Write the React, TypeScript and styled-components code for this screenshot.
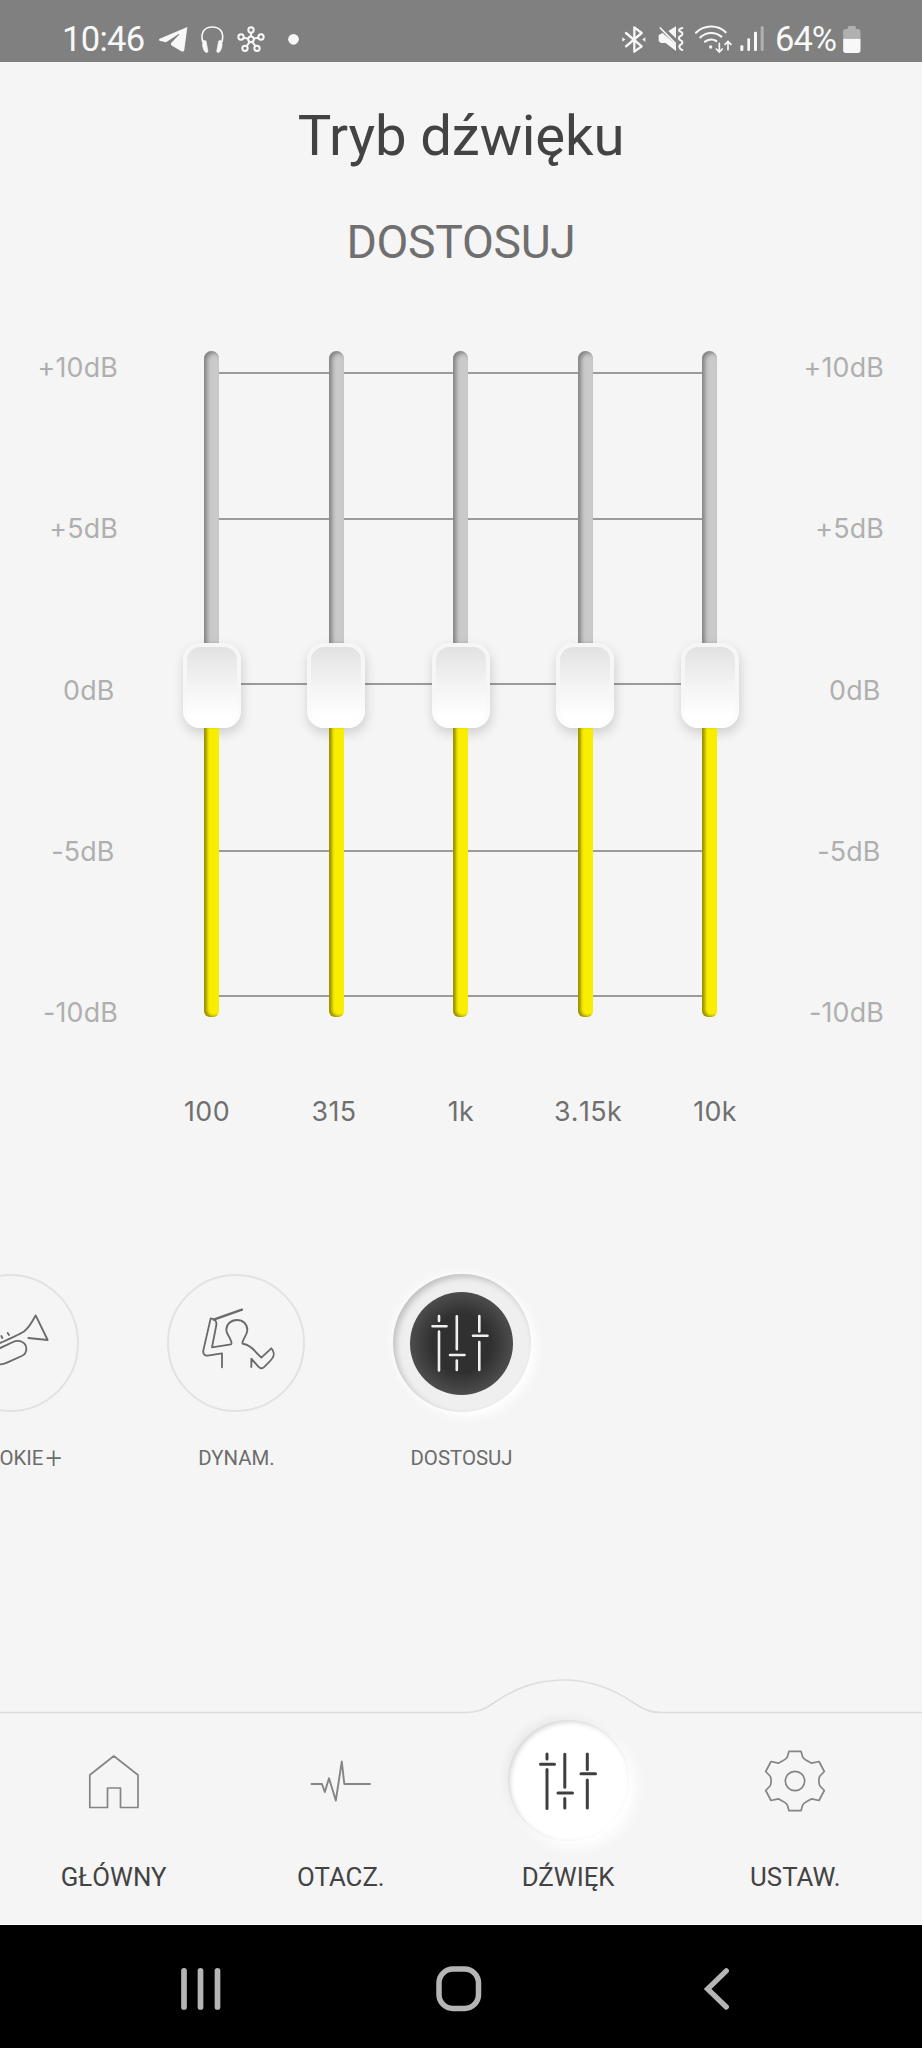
import React from "react";
import styled, { createGlobalStyle } from "styled-components";

const GlobalStyle = createGlobalStyle`
  * { box-sizing: border-box; }
  body { margin: 0; background: #f5f5f5; }
`;

const Screen = styled.div`
  width: 922px;
  height: 2048px;
  display: flex;
  flex-direction: column;
  overflow: hidden;
  background: #f5f5f5;
  font-family: Roboto, "Liberation Sans", sans-serif;
`;

const StatusBar = styled.header`
  height: 62px;
  flex: none;
  display: flex;
  justify-content: space-between;
  align-items: flex-end;
  padding: 0 61px 8px 62px;
  background: #808080;
  color: #f8f8f8;
`;

const StatusGroup = styled.div`
  display: flex;
  align-items: center;
  height: 30px;
`;

const StatusText = styled.span<{ $width: number; $spacing: number }>`
  width: ${(p) => p.$width}px;
  font-size: 34.5px;
  line-height: 30px;
  letter-spacing: ${(p) => p.$spacing}px;
  white-space: nowrap;
`;

const StatusIcon = styled.svg<{ $gap: number }>`
  display: block;
  flex: none;
  margin-left: ${(p) => p.$gap}px;
  overflow: visible;
`;

const BatteryText = styled.div`
  display: flex;
  margin-left: 11px;
`;

const Title = styled.h1`
  margin: 44px 0 0;
  font-size: 56.3px;
  line-height: 60px;
  font-weight: 400;
  letter-spacing: -0.15px;
  text-align: center;
  color: #434343;
`;

const ModeName = styled.h2`
  margin: 51px 0 0;
  font-size: 46.3px;
  line-height: 50px;
  font-weight: 400;
  letter-spacing: -0.3px;
  text-align: center;
  color: #6f6f6f;
`;

const Equalizer = styled.section`
  display: flex;
  height: 677px;
  margin-top: 84px;
  padding: 0 38px 0 0;
`;

const Scale = styled.div<{ $width: number }>`
  width: ${(p) => p.$width}px;
  display: flex;
  flex-direction: column;
  justify-content: space-between;
  text-align: right;
`;

const ScaleLabel = styled.span<{ $inset?: boolean }>`
  font-family: Inter, "Liberation Sans", sans-serif;
  font-size: 26.8px;
  line-height: 32px;
  letter-spacing: 0.2px;
  padding-right: ${(p) => (p.$inset ? 3.5 : 0)}px;
  color: #afafaf;
`;

const gridLine = "linear-gradient(#9b9b9b, #9b9b9b)";

const Chart = styled.div`
  width: 556px;
  height: 666px;
  margin: 0 auto 0 64.5px;
  display: flex;
  justify-content: space-between;
  background-image: ${gridLine}, ${gridLine}, ${gridLine}, ${gridLine}, ${gridLine};
  background-repeat: no-repeat;
  background-size: 498px 2px;
  background-position: 29px 21px, 29px 167px, 29px 332px, 29px 499px, 29px 644px;
`;

const Slider = styled.div`
  width: 58px;
  display: flex;
  flex-direction: column;
  align-items: center;
`;

const TrackAbove = styled.div`
  width: 15px;
  height: 292px;
  border-radius: 8px 8px 0 0;
  background: #cacaca;
  box-shadow: inset 3px 2px 4px rgba(0, 0, 0, 0.36);
`;

const TrackBelow = styled.div`
  width: 15px;
  flex: 1;
  border-radius: 0 0 6px 6px;
  background: #faee00;
  box-shadow: inset 3px -1px 3px rgba(60, 55, 0, 0.5);
`;

const Thumb = styled.div`
  width: 58px;
  height: 85px;
  padding: 4px;
  border-radius: 17px;
  background: linear-gradient(#f6f6f6 60%, #ffffff);
  box-shadow: 1px 5px 12px rgba(0, 0, 0, 0.16);

  &::after {
    content: "";
    display: block;
    height: 77px;
    border-radius: 13px;
    background: linear-gradient(#e2e2e2, #f4f4f4 50%, #ffffff 90%);
  }
`;

const Frequencies = styled.div`
  display: flex;
  width: 635px;
  margin: 67px auto 0;
`;

const Frequency = styled.span`
  flex: 1;
  font-family: Inter, "Liberation Sans", sans-serif;
  font-size: 26.8px;
  line-height: 32px;
  letter-spacing: 0.4px;
  font-kerning: none;
  text-align: center;
  color: #6f6f6f;
`;

const Presets = styled.section`
  display: flex;
  margin: 147px 0 0 -103.5px;
`;

const Preset = styled.div`
  width: 226px;
  flex: none;
  display: flex;
  flex-direction: column;
  align-items: center;
`;

const PresetCircle = styled.div`
  width: 138px;
  height: 138px;
  border: 2px solid #e2e2e2;
  border-radius: 50%;
`;

const ActivePresetCircle = styled.div`
  width: 138px;
  height: 138px;
  display: flex;
  align-items: center;
  justify-content: center;
  border-radius: 50%;
  background: #efefef;
  box-shadow: inset 3px 3px 6px rgba(0, 0, 0, 0.2), 5px 5px 11px #ffffff, -3px -3px 8px rgba(255, 255, 255, 0.6);
`;

const ActivePresetDisc = styled.div`
  width: 103px;
  height: 103px;
  padding: 21px 0 0 20px;
  border-radius: 50%;
  background: radial-gradient(circle, #303030 40%, #4e4e4e 72%);
`;

const PresetLabel = styled.span<{ $shift?: number }>`
  margin: 34px 0 0 ${(p) => p.$shift ?? 0}px;
  font-size: 20.4px;
  line-height: 24px;
  white-space: nowrap;
  color: #6c6c6c;
`;

const Plus = styled.span`
  display: inline-block;
  margin-left: 2px;
  font-size: 29px;
  line-height: 20px;
  font-weight: 300;
  vertical-align: -3px;
`;

const Art = styled.svg`
  display: block;
  overflow: visible;
`;

const Nav = styled.nav`
  position: relative;
  display: flex;
  height: 255px;
  margin-top: auto;
  padding: 50px 13px 0 0;
  border-bottom: 1px solid #ffffff;
`;

const NavOutline = styled.svg`
  position: absolute;
  inset: 0;
`;

const NavItem = styled.div`
  position: relative;
  flex: 1;
  display: flex;
  flex-direction: column;
  align-items: center;
`;

const NavIcon = styled.div<{ $active?: boolean }>`
  width: 121px;
  height: 121px;
  display: flex;
  align-items: center;
  justify-content: center;
  border-radius: 50%;
  ${(p) =>
    p.$active &&
    `background: #ffffff;
     box-shadow: inset 2px 2px 5px rgba(0, 0, 0, 0.17), 7px 7px 14px #ffffff, -3px -3px 9px rgba(0, 0, 0, 0.05);`}
`;

const NavLabel = styled.span`
  margin-top: 21px;
  font-size: 25.8px;
  line-height: 30px;
  color: #434343;
`;

const SystemBar = styled.footer`
  flex: none;
  height: 123px;
  display: flex;
  align-items: flex-start;
  padding: 41px 0 0 180px;
  background: #000000;
`;

const SystemButton = styled.div<{ $width: number }>`
  width: ${(p) => p.$width}px;
`;

function SlidersIcon({ color, width }: { color: string; width: number }) {
  return (
    <Art width="60" height="60" viewBox="0 0 60 60" fill="none" stroke={color} strokeWidth={width} strokeLinecap="round">
      <path d="M9 3v5M9 18.500v39M2.500 13.300h14M26.800 3.200v33M26.800 47.500v9.500M20 42h14.500M49.300 3v15.500M49.300 29v28M43 22.800h14.500" />
    </Art>
  );
}

function TrumpetIcon() {
  return (
    <Art width="134" height="134" viewBox="-172 76 402 402" fill="none" stroke="#6a6a6a" strokeWidth="5.5" strokeLinecap="round" strokeLinejoin="round">
      <path d="M84 262L142 268L106 194C96 212 88 230 70 243C50 255 20 268 -40 294M-30 306L38 274C58 265 78 276 78 294C78 304 73 312 64 316L20 336C5 343-10 342-20 334" />
      <path d="M-13 262l5 11M3 256l3 6M22 247l4 6" />
    </Art>
  );
}

function DrummerIcon() {
  return (
    <Art width="134" height="134" viewBox="504 76 402 402" fill="none" stroke="#6a6a6a" strokeWidth="5.500" strokeLinecap="round" strokeLinejoin="round">
      <path d="M663 350V308L620 315C611 316 605 309 607 299L629 203C640 204 648 212 646 223L633 290L690 281C694 278 690 272 688 266C683 254 676 248 676 238C676 220 690 208 708 208C726 208 739 220 739 238C739 250 731 257 727 268C724 276 722 279 728 280C748 283 756 295 767 307L781 321L811 293C819 301 820 313 815 321C810 330 798 341 788 350C782 355 778 354 772 348L751 324V349" />
      <path d="M638 207L723 177" strokeWidth="7" />
    </Art>
  );
}

const scaleValues = ["+10dB", "+5dB", "0dB", "-5dB", "-10dB"];
const bands = ["100", "315", "1k", "3.15k", "10k"];

function DbScale({ width }: { width: number }) {
  return (
    <Scale $width={width}>
      {scaleValues.map((v) => (
        <ScaleLabel key={v} $inset={v === "0dB" || v === "-5dB"}>
          {v}
        </ScaleLabel>
      ))}
    </Scale>
  );
}

export default function App() {
  return (
    <Screen>
      <GlobalStyle />
      <StatusBar>
        <StatusGroup>
          <StatusText $width={84} $spacing={-0.7}>10:46</StatusText>
          <StatusIcon $gap={12.5} width="29" height="27" viewBox="475 80 87 81" fill="#f8f8f8">
            <path d="M560 83L477 118C473 121 475 124 480 125L496 129L533 105C537 103 537 105 534 108L512 130C510 133 511 137 514 139L542 156C547 158 550 156 551 151Z" />
          </StatusIcon>
          <StatusIcon $gap={13} width="23" height="27" viewBox="601 76 69 81" fill="none" stroke="#f8f8f8">
            <path d="M606 124C598 92 614 79 635 79C656 79 672 92 664 124" strokeWidth="5" />
            <path d="M609 119C602 129 607 149 616 156L622 153L616 121ZM661 119C668 129 663 149 654 156L648 153L654 121Z" fill="#f8f8f8" strokeWidth="2" strokeLinejoin="round" />
          </StatusIcon>
          <StatusIcon $gap={14.5} width="26" height="27" viewBox="714 78 78 81" fill="none" stroke="#f8f8f8" strokeWidth="6">
            <circle cx="753" cy="118" r="8.500" />
            <circle cx="753" cy="90" r="8" />
            <circle cx="723" cy="111" r="8" />
            <circle cx="783" cy="111" r="8" />
            <circle cx="735" cy="145" r="8" />
            <circle cx="771" cy="145" r="8" />
            <path d="M753 98v11M731 113l14 3M775 113l-14 3M740 138l8-11M766 138l-8-11" strokeWidth="6" />
          </StatusIcon>
          <StatusIcon $gap={24} width="11" height="27" viewBox="864 75 33 81" fill="#f8f8f8">
            <circle cx="880.500" cy="115" r="16" />
          </StatusIcon>
        </StatusGroup>
        <StatusGroup>
          <StatusIcon $gap={0} width="24" height="27" viewBox="479 75 72 81" fill="none" stroke="#f8f8f8" strokeWidth="7" strokeLinejoin="round" strokeLinecap="round">
            <path d="M491 96L538 136L516 152V79L538 96L491 136" />
            <path d="M480 109l9 6.500l-9 6.500zM549 109l-9 6.500l9 6.500z" fill="#f8f8f8" stroke="none" />
          </StatusIcon>
          <StatusIcon $gap={12} width="26" height="27" viewBox="588 76 78 81" fill="none" stroke="#f8f8f8" strokeLinecap="round">
            <path d="M602 97L590 103V122L597 127H611L642 151V132ZM619 91L642 77V113Z" fill="#f8f8f8" stroke="none" />
            <path d="M595 82L640 128" strokeWidth="5" />
            <path d="M661 82C649 84 649 91 656 93C664 96 662 104 656 106C648 109 649 116 656 119C664 122 662 130 656 132C649 136 652 145 661 148" strokeWidth="6" />
          </StatusIcon>
          <StatusIcon $gap={11} width="38" height="28" viewBox="701 71 114 84" fill="none" stroke="#f8f8f8" strokeWidth="6.500" strokeLinecap="round">
            <path d="M704 94C728 70 770 69 793 93" />
            <path d="M717 108C736 91 762 91 780 106M731 121C743 113 755 113 765 119" />
            <circle cx="748" cy="137" r="5" fill="#f8f8f8" stroke="none" />
            <path d="M774 126V151M765 143L774 152L783 143M800 145V120M791 129L800 120L809 129" strokeWidth="5" />
          </StatusIcon>
          <StatusIcon $gap={7} width="24" height="26" viewBox="836 76 72 78" fill="#f8f8f8">
            <rect x="837" y="134" width="9" height="17" rx="3" />
            <rect x="858" y="113" width="8" height="38" rx="3" />
            <rect x="878" y="93" width="9" height="58" rx="3" />
            <rect x="898" y="77" width="9" height="74" rx="3" opacity=".4" />
          </StatusIcon>
          <BatteryText>
            <StatusText $width={61} $spacing={-1}>64%</StatusText>
          </BatteryText>
          <StatusIcon $gap={7} width="18" height="27" viewBox="1147 75 53 81" fill="#f8f8f8">
            <path d="M1147 113V92Q1147 84 1155 84H1161V79Q1161 75 1165 75H1181Q1185 75 1185 79V84H1191Q1199 84 1199 92V113Z" opacity=".4" />
            <path d="M1147 113H1199V148Q1199 156 1191 156H1155Q1147 156 1147 148Z" />
          </StatusIcon>
        </StatusGroup>
      </StatusBar>

      <Title>Tryb dźwięku</Title>
      <ModeName>DOSTOSUJ</ModeName>

      <Equalizer>
        <DbScale width={118} />
        <Chart>
          {bands.map((b) => (
            <Slider key={b}>
              <TrackAbove />
              <Thumb />
              <TrackBelow />
            </Slider>
          ))}
        </Chart>
        <DbScale width={120} />
      </Equalizer>
      <Frequencies>
        {bands.map((b) => (
          <Frequency key={b}>{b}</Frequency>
        ))}
      </Frequencies>

      <Presets>
        <Preset>
          <PresetCircle>
            <TrumpetIcon />
          </PresetCircle>
          <PresetLabel $shift={15}>
            COOKIE<Plus>+</Plus>
          </PresetLabel>
        </Preset>
        <Preset>
          <PresetCircle>
            <DrummerIcon />
          </PresetCircle>
          <PresetLabel $shift={2}>DYNAM.</PresetLabel>
        </Preset>
        <Preset>
          <ActivePresetCircle>
            <ActivePresetDisc>
              <SlidersIcon color="#f0f0f0" width={2.6} />
            </ActivePresetDisc>
          </ActivePresetCircle>
          <PresetLabel>DOSTOSUJ</PresetLabel>
        </Preset>
      </Presets>

      <Nav>
        <NavOutline width="922" height="60" viewBox="0 0 922 60" fill="none" stroke="#dedede" strokeWidth="1.600">
          <path d="M0 42.500H465C476 42.500 484 40 495 32C515 19 535 10 564 10C593 10 615 20 634 33C645 40 650 42.500 662 42.500H922" />
        </NavOutline>
        <NavItem>
          <NavIcon>
            <Art width="52" height="56" viewBox="0 0 52 56" fill="none" stroke="#858585" strokeWidth="1.700" strokeLinejoin="round">
              <path d="M1.800 54.500V22L25.800 3L50 22V54.500H32.500V35H19.500V54.500Z" />
            </Art>
          </NavIcon>
          <NavLabel>GŁÓWNY</NavLabel>
        </NavItem>
        <NavItem>
          <NavIcon>
            <Art width="60" height="42" viewBox="0 0 60 42" fill="none" stroke="#858585" strokeWidth="1.900" strokeLinejoin="round" strokeLinecap="round">
              <path d="M0.500 24H11L13.800 32L18 18.300L24.800 40.500L30.800 1.500L33.300 24H59" />
            </Art>
          </NavIcon>
          <NavLabel>OTACZ.</NavLabel>
        </NavItem>
        <NavItem>
          <NavIcon $active>
            <SlidersIcon color="#3e3e3e" width={3} />
          </NavIcon>
          <NavLabel>DŹWIĘK</NavLabel>
        </NavItem>
        <NavItem>
          <NavIcon>
            <Art width="64" height="64" viewBox="-32 -32 64 64" fill="none" stroke="#858585" strokeWidth="1.700" strokeLinejoin="round">
              <circle r="9.700" />
              <path d="M-6 -29.700H6L7.700 -24C8.500 -21.500 13 -20 16.700 -17.800L24 -19.500L29.300 -9.500L25 -5C23.500 -3 23.500 3 25 5L29.300 9.500L24 19.500L16.700 17.800C13 20 8.500 21.500 7.700 24L6 29.700H-6L-7.700 24C-8.500 21.500 -13 20 -16.700 17.800L-24 19.500L-29.300 9.500L-25 5C-23.500 3 -23.500 -3 -25 -5L-29.300 -9.500L-24 -19.500L-16.700 -17.800C-13 -20 -8.500 -21.500 -7.700 -24Z" />
            </Art>
          </NavIcon>
          <NavLabel>USTAW.</NavLabel>
        </NavItem>
      </Nav>

      <SystemBar>
        <SystemButton $width={255.5}>
          <Art width="42" height="46" viewBox="0 0 42 46" stroke="#b5b5b5" strokeWidth="5.700" strokeLinecap="round">
            <path d="M4 4.800V41M20.500 4.800V41M37.500 4.800V41" />
          </Art>
        </SystemButton>
        <SystemButton $width={268.5}>
          <Art width="46" height="46" viewBox="0 0 46 46" fill="none" stroke="#b5b5b5" strokeWidth="5.500">
            <rect x="3" y="3" width="39.500" height="39.500" rx="14" />
          </Art>
        </SystemButton>
        <SystemButton $width={26}>
          <Art width="26" height="46" viewBox="0 0 26 46" fill="none" stroke="#b5b5b5" strokeWidth="5.300" strokeLinecap="round">
            <path d="M22.300 4.800L3.600 23L22.300 41" />
          </Art>
        </SystemButton>
      </SystemBar>
    </Screen>
  );
}
